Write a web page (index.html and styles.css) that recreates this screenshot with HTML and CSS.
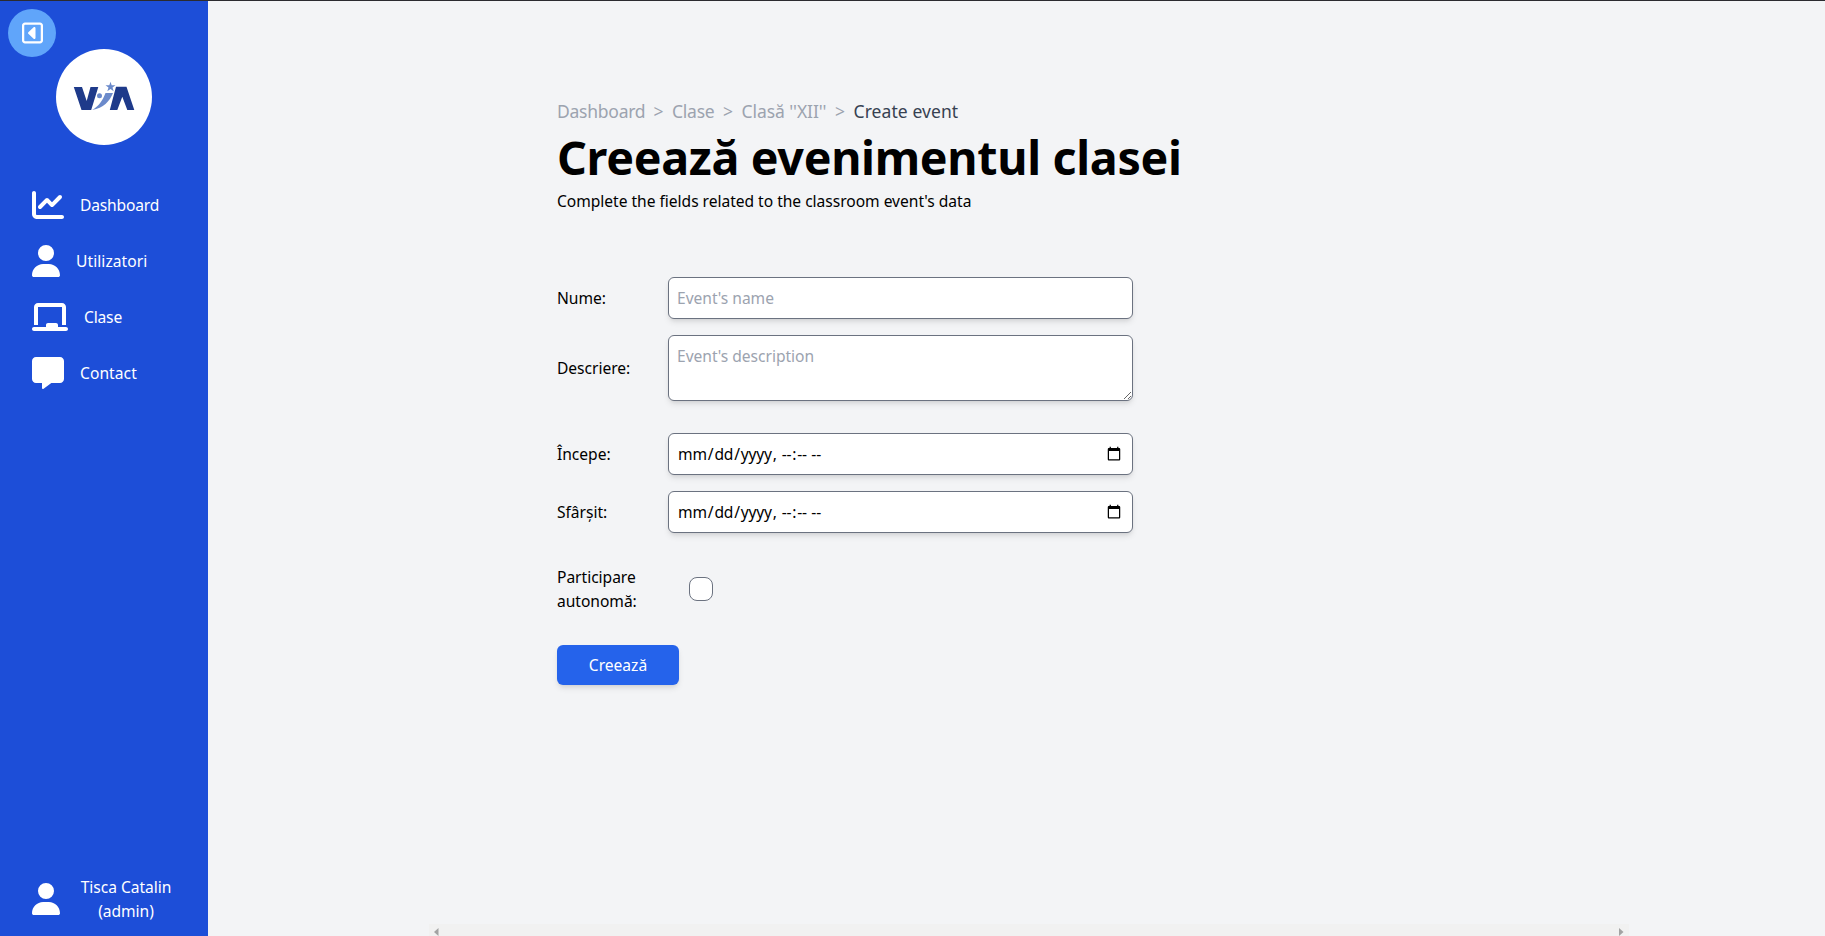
FILE: index.html
```html
<!DOCTYPE html>
<html lang="ro">
<head>
<meta charset="utf-8">
<title>Create event</title>
<link rel="stylesheet" href="styles.css">
</head>
<body>
<div class="app">
  <aside class="sidebar">
    <button class="collapse" aria-label="Collapse">
      <svg viewBox="0 0 448 512" width="21" height="24"><path fill="#fff" d="M48 416c0 8.800 7.200 16 16 16l320 0c8.800 0 16-7.200 16-16l0-320c0-8.800-7.200-16-16-16L64 80c-8.800 0-16 7.200-16 16l0 320zm16 64c-35.300 0-64-28.700-64-64L0 96C0 60.700 28.700 32 64 32l320 0c35.300 0 64 28.700 64 64l0 320c0 35.300-28.700 64-64 64L64 480zm64-224c0-6.700 2.800-13 7.700-17.600l112-104c7-6.500 17.200-8.200 25.900-4.400s14.400 12.500 14.400 22l0 208c0 9.500-5.700 18.200-14.400 22s-18.900 2.100-25.900-4.400l-112-104c-4.900-4.500-7.700-10.900-7.700-17.600z"/></svg>
    </button>
    <div class="logo">
      <svg viewBox="0 0 96 96" width="96" height="96">
        <path fill="#1e3a8a" d="M17.800 38h8.200l4.700 14L34.500 38H42.300L35.200 61h-9.700zM60 37.800h10.500L78.300 61h-7l-5-13.300L61.300 61h-7.500z"/>
        <path fill="#6b8acb" d="M36.200 61c6.500-4 10.300-9 13.300-17h7.500c-3.500 8.500-9.500 15-20.800 17zM54.500 32.800l1.200 3.400h3.800l-3 2.300 1.200 3.700-3.200-2.200-3.200 2.200 1.200-3.700-3-2.300h3.800z"/>
        <circle cx="43.500" cy="46.800" r="2.500" fill="#6b8acb"/>
      </svg>
    </div>
    <nav class="nav">
      <a class="item"><svg viewBox="0 0 512 512" width="32" height="32"><path fill="#fff" d="M64 64c0-17.700-14.300-32-32-32S0 46.300 0 64L0 400c0 44.200 35.800 80 80 80l400 0c17.700 0 32-14.300 32-32s-14.300-32-32-32L80 416c-8.800 0-16-7.200-16-16L64 64zm406.600 86.600c12.500-12.500 12.500-32.800 0-45.300s-32.800-12.500-45.300 0L320 210.700l-57.400-57.400c-12.500-12.500-32.800-12.500-45.300 0l-112 112c-12.500 12.500-12.500 32.800 0 45.300s32.800 12.500 45.300 0L240 221.300l57.400 57.400c12.500 12.500 32.800 12.500 45.300 0l128-128z"/></svg><span>Dashboard</span></a>
      <a class="item"><svg viewBox="0 0 448 512" width="28" height="32"><path fill="#fff" d="M224 256A128 128 0 1 0 224 0a128 128 0 1 0 0 256zm-45.700 48C79.800 304 0 383.800 0 482.300C0 498.700 13.300 512 29.700 512l388.600 0c16.400 0 29.700-13.300 29.700-29.700C448 383.800 368.200 304 269.700 304l-91.400 0z"/></svg><span class="wide">Utilizatori</span></a>
      <a class="item"><svg viewBox="0 0 576 512" width="36" height="32"><path fill="#fff" d="M96 32C60.700 32 32 60.700 32 96l0 288 64 0L96 96l384 0 0 288 64 0 0-288c0-35.300-28.700-64-64-64L96 32zM224 384l0 32L32 416c-17.700 0-32 14.300-32 32s14.300 32 32 32l512 0c17.700 0 32-14.300 32-32s-14.300-32-32-32l-128 0 0-32c0-17.700-14.300-32-32-32l-128 0c-17.700 0-32 14.300-32 32z"/></svg><span>Clase</span></a>
      <a class="item"><svg viewBox="0 0 512 512" width="32" height="32"><path fill="#fff" d="M64 0C28.700 0 0 28.700 0 64L0 352c0 35.300 28.700 64 64 64l96 0 0 80c0 6.100 3.400 11.600 8.800 14.300s11.900 2.100 16.800-1.500L309.300 416 448 416c35.300 0 64-28.700 64-64l0-288c0-35.300-28.700-64-64-64L64 0z"/></svg><span class="wide">Contact</span></a>
    </nav>
    <div class="item account"><svg viewBox="0 0 448 512" width="28" height="32"><path fill="#fff" d="M224 256A128 128 0 1 0 224 0a128 128 0 1 0 0 256zm-45.700 48C79.800 304 0 383.800 0 482.300C0 498.700 13.300 512 29.700 512l388.600 0c16.400 0 29.700-13.300 29.700-29.700C448 383.800 368.200 304 269.700 304l-91.400 0z"/></svg><span class="who">Tisca Catalin (admin)</span></div>
  </aside>
  <main class="main">
    <div class="content">
      <div class="crumbs"><a class="c1">Dashboard</a><i>&gt;</i><a class="c2">Clase</a><i>&gt;</i><a class="c3">Clasă ''XII''</a><i>&gt;</i><span class="current">Create event</span></div>
      <h1>Creează evenimentul clasei</h1>
      <p class="sub">Complete the fields related to the classroom event's data</p>
      <form class="form">
        <label class="row"><span class="label">Nume:</span><input class="field" type="text" placeholder="Event's name"></label>
        <label class="row"><span class="label">Descriere:</span><textarea class="field area" placeholder="Event's description"></textarea></label>
        <label class="row start"><span class="label">Începe:</span><input class="field date" type="datetime-local"></label>
        <label class="row"><span class="label">Sfârșit:</span><input class="field date" type="datetime-local"></label>
        <label class="row check"><span class="label">Participare autonomă:</span><input class="box" type="checkbox"></label>
        <button class="submit" type="button">Creează</button>
      </form>
    </div>
    <div class="scroll"><svg width="5" height="8" viewBox="0 0 5 8"><path fill="#a3a3a3" d="M4.500 0v8L0 4z"/></svg><svg width="5" height="8" viewBox="0 0 5 8"><path fill="#a3a3a3" d="M0 0v8L4.500 4z"/></svg></div>
  </main>
</div>
</body>
</html>
```
FILE: styles.css
```css
* { box-sizing: border-box; }
body { margin: 0; font: 15.6px/24px "Noto Sans", "Open Sans", sans-serif; letter-spacing: -0.03px; color: #000; background: #f3f4f6; }
.app { display: flex; height: 936px; border-top: 1px solid #2b2b30; overflow: hidden; }
.sidebar { width: 208px; flex: none; background: #1d4ed8; color: #fff; display: flex; flex-direction: column; position: relative; padding: 48px 32px 13px; }
.collapse { position: absolute; left: 8px; top: 8px; width: 48px; height: 48px; border: 0; border-radius: 50%; background: #60a5fa; display: flex; align-items: center; justify-content: center; padding: 0; }
.logo { width: 96px; height: 96px; border-radius: 50%; background: #fff; align-self: center; }
.nav { display: flex; flex-direction: column; gap: 24px; margin-top: 44px; letter-spacing: -0.18px; }
.wide { letter-spacing: 0.06px; }
.item { display: flex; align-items: center; gap: 16px; color: #fff; }
.item svg { flex: none; }
.account { margin-top: auto; }
.who { flex: 1; text-align: center; }
.main { flex: 1; display: flex; flex-direction: column; align-items: center; padding-left: 25px; }
.content { width: 1200px; padding: 96px 128px 0; flex: 1; }
.crumbs { display: flex; font-size: 17.5px; line-height: 28px; color: #9ca3af; white-space: nowrap; }
.crumbs i { font-style: normal; width: 27px; text-align: center; flex: none; }
.c1 { width: 88px; letter-spacing: -0.25px; }
.c2 { width: 42.5px; letter-spacing: -0.25px; }
.c3 { width: 85px; letter-spacing: -0.08px; }
.current { color: #374151; letter-spacing: 0.08px; }
h1 { margin: 8px 0; font-size: 46.6px; line-height: 48px; font-weight: 700; letter-spacing: -0.32px; white-space: nowrap; }
.sub { margin: 0; }
.form { margin-top: 64px; width: 576px; }
.row { display: flex; align-items: center; margin-bottom: 16px; }
.label { width: 111px; flex: none; }
.field { flex: 1; min-width: 0; height: 42px; margin: 0; padding: 8px; border: 1px solid #6b7280; border-radius: 6px; background: #fff; font: inherit; letter-spacing: inherit; color: #000; box-shadow: 0 4px 6px -1px rgba(0,0,0,.1), 0 2px 4px -2px rgba(0,0,0,.1); outline: 0; }
.field::placeholder { color: #9ca3af; opacity: 1; }
.area { height: 66px; }
.date { letter-spacing: -0.2px; }
.start { margin-top: 32px; }
.check { margin-top: 32px; }
.box { appearance: none; width: 24px; height: 24px; margin: 0 0 0 21px; border: 1px solid #6b7280; border-radius: 8px; background: #fff; }
.submit { display: block; margin-top: 32px; width: 122px; height: 40px; border: 0; border-radius: 6px; background: #2563eb; color: #fff; font: inherit; padding: 0; box-shadow: 0 4px 6px -1px rgba(0,0,0,.1), 0 2px 4px -2px rgba(0,0,0,.1); }
.scroll { width: 1200px; height: 12px; background: #f1f1f1; display: flex; justify-content: space-between; padding: 4px 5px 0; }
```
